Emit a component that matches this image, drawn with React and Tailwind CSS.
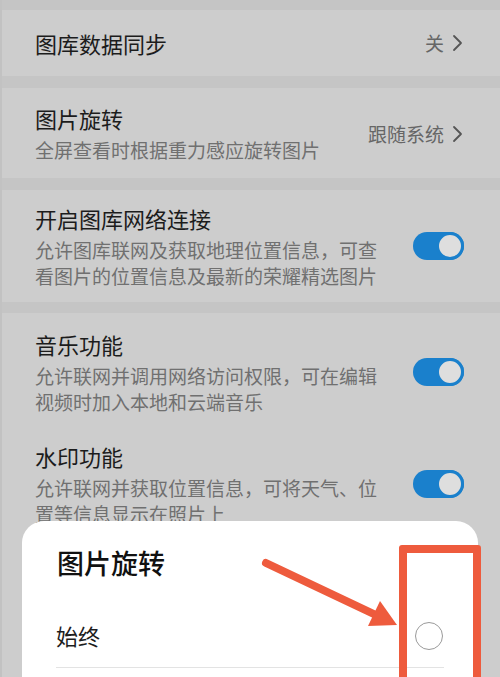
import React from 'react';

const font = { fontFamily: '"Noto Sans CJK SC", "Noto Sans", sans-serif' };

function Chevron() {
    return (
        <svg width="11" height="18" viewBox="0 0 11 18" className="ml-[8px]">
            <polyline points="2,2 9,9 2,16" fill="none" stroke="#555" strokeWidth="1.8" strokeLinecap="round" strokeLinejoin="round" />
        </svg>
    );
}

function Toggle() {
    return (
        <div className="w-[51px] h-[28px] rounded-full bg-[#1a80cc] flex items-center justify-end shrink-0">
            <div className="w-[28px] h-[28px] rounded-full bg-[#dedede] border-[3px] border-[#1a80cc]"></div>
        </div>
    );
}

const Sep = ({ h }) => <div className={`bg-[#c5c5c5] ${h}`}></div>;

function ToggleRow({ title, lines, className }) {
    return (
        <div className={`flex items-center pl-[33px] pr-[36px] gap-[28px] ${className}`}>
            <div className="flex-1">
                <div className="text-[22px] leading-[30px] text-[#1c1c1c]">{title}</div>
                <div className="mt-[4px] text-[19px] leading-[26px] text-[#707070]">
                    {lines.map((l, i) => <div key={i}>{l}</div>)}
                </div>
            </div>
            <Toggle />
        </div>
    );
}

export default function App() {
    return (
        <div className="relative w-[500px] h-[677px] overflow-hidden bg-[#cdcdcd] border-l-2 border-[#c2c2c2]" style={font}>
            <Sep h="h-[10px]" />
            <div className="h-[66px] flex items-center justify-between pl-[33px] pr-[37px]">
                <span className="text-[22px] text-[#1c1c1c]">图库数据同步</span>
                <span className="flex items-center text-[19px] text-[#666]">关<Chevron /></span>
            </div>
            <Sep h="h-[12px]" />
            <div className="h-[90px] flex items-center justify-between pl-[33px] pr-[37px]">
                <div>
                    <div className="text-[22px] leading-[30px] text-[#1c1c1c]">图片旋转</div>
                    <div className="mt-[4px] text-[19px] leading-[26px] text-[#707070]">全屏查看时根据重力感应旋转图片</div>
                </div>
                <span className="flex items-center text-[19px] text-[#666] mt-[2px]">跟随系统<Chevron /></span>
            </div>
            <Sep h="h-[12px]" />
            <ToggleRow
                className="pt-[13px] pb-[13px]"
                title="开启图库网络连接"
                lines={['允许图库联网及获取地理位置信息，可查', '看图片的位置信息及最新的荣耀精选图片']}
            />
            <Sep h="h-[11px]" />
            <ToggleRow
                className="pt-[16px] pb-[14px]"
                title="音乐功能"
                lines={['允许联网并调用网络访问权限，可在编辑', '视频时加入本地和云端音乐']}
            />
            <ToggleRow
                className="pt-[12px] pb-[14px]"
                title="水印功能"
                lines={['允许联网并获取位置信息，可将天气、位', '置等信息显示在照片上']}
            />

            <div className="absolute left-[20px] right-[22px] top-[521px] h-[200px] bg-white rounded-t-[22px]">
                <div className="pt-[24px] pl-[35px] text-[27px] leading-[36px] text-[#111] font-medium">图片旋转</div>
                <div className="mt-[23px] mx-[34px] h-[64px] flex items-center justify-between border-b border-[#e3e3e3]">
                    <span className="text-[22px] text-[#1c1c1c]">始终</span>
                    <div className="w-[28px] h-[28px] rounded-full border-[1.5px] border-[#9a9a9a] mr-[1px]"></div>
                </div>
            </div>

            <div className="absolute left-[397px] top-[545px] w-[82px] h-[160px] border-[8px] border-[#ee5b3d] rounded-[3px]"></div>
            <svg className="absolute left-[-2px] top-0" width="500" height="677" viewBox="0 0 500 677">
                <line x1="266" y1="563" x2="378" y2="616" stroke="#ee5b3d" strokeWidth="8" strokeLinecap="round" />
                <polygon points="397,625 368,626 380,601" fill="#ee5b3d" />
            </svg>
        </div>
    );
}
